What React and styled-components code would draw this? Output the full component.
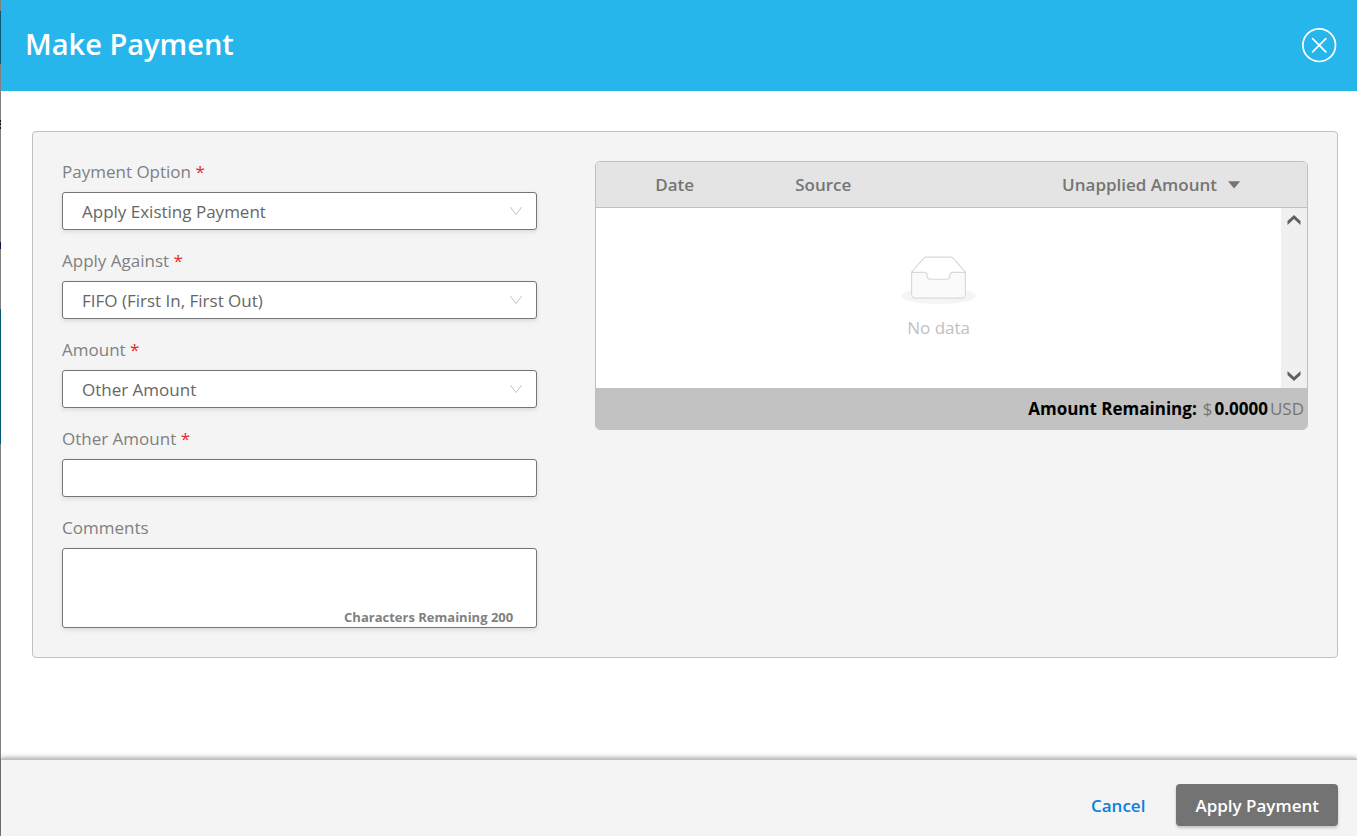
import React from 'react';
import styled, { createGlobalStyle } from 'styled-components';

const GlobalStyle = createGlobalStyle`
  *, *::before, *::after { box-sizing: border-box; }
  body {
    margin: 0;
    font-family: "Open Sans", "Noto Sans", sans-serif;
    font-size: 17px;
    line-height: 24px;
    color: #757575;
    background: #fff;
  }
  button, input, select, textarea { font: inherit; color: inherit; margin: 0; }
`;

/* The left edge shows a sliver of the dimmed page under the drawer. */
const Drawer = styled.div`
  display: flex;
  flex-direction: column;
  min-height: 100vh;
  padding-left: 1px;
  background:
    linear-gradient(#808080 11px, #075a77 11px 64px, #808080 64px 120px, #111 120px 122px,
      #808080 122px 123px, #111 123px 125px, #808080 125px 127px, #111 127px 129px,
      #808080 129px 242px, #1d1147 242px 249px, #808080 249px 309px, #075a77 309px 444px,
      #808080 444px) 0 0 / 1px 100% no-repeat,
    #fff;
`;

const Header = styled.header`
  display: flex;
  align-items: center;
  justify-content: space-between;
  height: 91px;
  padding: 0 20px 0 24px;
  background: #27b6ec;
  color: #fff;
`;

const Title = styled.h1`
  margin: 0;
  padding-bottom: 4px;
  font-size: 29px;
  font-weight: 600;
  line-height: 40px;
`;

const CloseButton = styled.button`
  display: flex;
  padding: 0;
  border: 0;
  background: none;
  cursor: pointer;
`;

const Body = styled.main`
  flex: 1;
  padding: 40px 19px 40px 31px;
`;

const Panel = styled.section`
  display: grid;
  grid-template-columns: 2fr 3fr;
  gap: 58px;
  align-items: start;
  padding: 29px;
  border: 1px solid #c0c0c0;
  border-radius: 4px;
  background: #f4f4f4;
`;

const Form = styled.form`
  display: flex;
  flex-direction: column;
  gap: 20px;
`;

const Field = styled.div`
  display: flex;
  flex-direction: column;
  gap: 10px;
`;

const Label = styled.label`
  line-height: 21px;
  color: #808080;
`;

const Required = styled.span`
  color: #e02b2b;
`;

const Control = styled.div`
  display: grid;
  height: ${(p) => (p.$tall ? '80px' : '38px')};
  border: 1px solid #757575;
  border-radius: 3px;
  background: #fff;
  box-shadow: 0 2px 4px rgba(0, 0, 0, 0.1);

  & > * { grid-area: 1 / 1; min-width: 0; }
`;

const Select = styled.select`
  appearance: none;
  width: 100%;
  padding: 2px 40px 0 19px;
  border: 0;
  border-radius: 3px;
  background: transparent;
  color: #666;
  outline: 0;
`;

const TextInput = styled.input`
  width: 100%;
  padding: 0 19px;
  border: 0;
  background: transparent;
  outline: 0;
`;

const TextArea = styled.textarea`
  width: 100%;
  padding: 6px 19px;
  border: 0;
  background: transparent;
  outline: 0;
  resize: none;
`;

const Chevron = styled.svg`
  place-self: center end;
  margin-right: 13px;
  pointer-events: none;
`;

const Counter = styled.span`
  place-self: end;
  margin-right: 23px;
  font-size: 13px;
  font-weight: 700;
  line-height: 20px;
  color: #808080;
  pointer-events: none;
`;

const TableCard = styled.div`
  overflow: hidden;
  border: 1px solid #c0c0c0;
  border-radius: 5px;
  background: #fff;
`;

const Table = styled.table`
  width: 100%;
  border-collapse: separate;
  border-spacing: 0;
  table-layout: fixed;
`;

const HeadCell = styled.th`
  width: ${(p) => p.$width || 'auto'};
  height: 46px;
  padding: ${(p) => (p.$end ? '0 66px 0 0' : '0 16px')};
  border-bottom: 1px solid #c0c0c0;
  background: #e4e4e4;
  font-weight: 600;
  text-align: ${(p) => (p.$end ? 'right' : 'left')};
`;

const SortButton = styled.button`
  display: inline-flex;
  align-items: center;
  gap: 11px;
  padding: 0;
  border: 0;
  background: none;
  font-weight: 600;
  white-space: nowrap;
  vertical-align: middle;
`;

const BodyCell = styled.td`
  padding: 0;
`;

const ScrollArea = styled.div`
  display: flex;
  height: 180px;
`;

const Empty = styled.div`
  flex: 1;
  display: flex;
  flex-direction: column;
  align-items: center;
  justify-content: center;
  gap: 12px;
  color: #bfbfbf;
`;

const ScrollTrack = styled.div`
  display: flex;
  flex-direction: column;
  justify-content: space-between;
  width: 26px;
  background: #f0f0f0;
`;

const ScrollButton = styled.button`
  display: flex;
  align-items: center;
  justify-content: center;
  height: 24px;
  padding: 0;
  border: 0;
  background: none;
`;

const TotalCell = styled.td`
  height: 41px;
  padding: 0 3px;
  background: #c2c2c2;
  text-align: right;
`;

const Total = styled.div`
  display: flex;
  justify-content: flex-end;
  gap: 2px;
`;

const TotalStrong = styled.strong`
  margin-right: ${(p) => (p.$label ? '4px' : '0')};
  font-weight: 700;
  color: #000;
`;

const Footer = styled.footer`
  display: flex;
  align-items: center;
  justify-content: flex-end;
  gap: 12px;
  padding: 24px 19px 10px;
  border-top: 1px solid #c0c0c0;
  background: #f4f4f4;
  box-shadow: 0 -1px 5px rgba(0, 0, 0, 0.4);
`;

const Button = styled.button`
  height: 42px;
  padding: 2px 19px 0;
  border: 0;
  border-radius: 4px;
  background: ${(p) => (p.$primary ? '#737373' : 'transparent')};
  box-shadow: ${(p) => (p.$primary ? '0 2px 3px rgba(0, 0, 0, 0.2)' : 'none')};
  color: ${(p) => (p.$primary ? '#fff' : '#0a80d8')};
  font-weight: 600;
  cursor: pointer;
`;

function FieldLabel({ id, required, children }) {
  return (
    <Label htmlFor={id}>
      {children}
      {required && <Required> *</Required>}
    </Label>
  );
}

function SelectField({ id, label, value }) {
  return (
    <Field>
      <FieldLabel id={id} required>{label}</FieldLabel>
      <Control>
        <Select id={id} defaultValue={value}>
          <option>{value}</option>
        </Select>
        <Chevron width="14" height="10" viewBox="0 0 14 10" fill="none" stroke="#c4c4c4" aria-hidden="true">
          <path d="M1.3 1l5.7 7.5L12.7 1" />
        </Chevron>
      </Control>
    </Field>
  );
}

function EmptyTray() {
  return (
    <svg width="75" height="48" viewBox="0 0 64 41" fill="none" aria-hidden="true">
      <g transform="translate(0 1)">
        <ellipse fill="#f5f5f5" cx="32" cy="33" rx="32" ry="7" />
        <g stroke="#d9d9d9">
          <path d="M55 12.76L44.854 1.258C44.367.474 43.656 0 42.907 0H21.093c-.749 0-1.46.474-1.947 1.257L9 12.761V22h46v-9.24z" />
          <path
            fill="#fafafa"
            d="M41.613 15.931c0-1.605.994-2.93 2.227-2.931H55v18.137C55 33.26 53.68 35 52.05 35h-40.1C10.32 35 9 33.259 9 31.137V13h11.16c1.233 0 2.227 1.323 2.227 2.928v.022c0 1.605 1.005 2.901 2.237 2.901h14.752c1.232 0 2.237-1.308 2.237-2.913v-.007z"
          />
        </g>
      </g>
    </svg>
  );
}

export default function App() {
  return (
    <>
      <GlobalStyle />
      <Drawer>
        <Header>
          <Title>Make Payment</Title>
          <CloseButton type="button" aria-label="Close">
            <svg width="35" height="35" viewBox="0 0 35 35" fill="none" stroke="#fff" strokeWidth="1.7" strokeLinecap="round">
              <circle cx="17.2" cy="17.2" r="16.3" />
              <path d="M10.6 10.6l13.2 13.2M23.8 10.6L10.6 23.8" />
            </svg>
          </CloseButton>
        </Header>

        <Body>
          <Panel>
            <Form>
              <SelectField id="option" label="Payment Option" value="Apply Existing Payment" />
              <SelectField id="against" label="Apply Against" value="FIFO (First In, First Out)" />
              <SelectField id="amount" label="Amount" value="Other Amount" />
              <Field>
                <FieldLabel id="other" required>Other Amount</FieldLabel>
                <Control><TextInput id="other" type="text" /></Control>
              </Field>
              <Field>
                <FieldLabel id="comments">Comments</FieldLabel>
                <Control $tall>
                  <TextArea id="comments" maxLength={200} />
                  <Counter>Characters Remaining 200</Counter>
                </Control>
              </Field>
            </Form>

            <TableCard>
              <Table>
                <thead>
                  <tr>
                    <HeadCell $width="43px" aria-label="Select" />
                    <HeadCell $width="140px" scope="col">Date</HeadCell>
                    <HeadCell scope="col">Source</HeadCell>
                    <HeadCell $end scope="col">
                      <SortButton type="button">
                        Unapplied Amount
                        <svg width="13" height="8" viewBox="0 0 13 8" aria-hidden="true">
                          <path d="M0 .2h12.2L6.1 7.6z" fill="#757575" />
                        </svg>
                      </SortButton>
                    </HeadCell>
                  </tr>
                </thead>
                <tbody>
                  <tr>
                    <BodyCell colSpan={4}>
                      <ScrollArea>
                        <Empty>
                          <EmptyTray />
                          No data
                        </Empty>
                        <ScrollTrack>
                          <ScrollButton type="button" aria-label="Scroll up">
                            <svg width="14" height="10" viewBox="0 0 14 10" aria-hidden="true">
                              <path d="M7 0l6.5 6v4L7 4 .5 10V6z" fill="#606060" />
                            </svg>
                          </ScrollButton>
                          <ScrollButton type="button" aria-label="Scroll down">
                            <svg width="14" height="10" viewBox="0 0 14 10" aria-hidden="true">
                              <path d="M7 10l6.5-6V0L7 6 .5 0v4z" fill="#606060" />
                            </svg>
                          </ScrollButton>
                        </ScrollTrack>
                      </ScrollArea>
                    </BodyCell>
                  </tr>
                </tbody>
                <tfoot>
                  <tr>
                    <TotalCell colSpan={4}>
                      <Total>
                        <TotalStrong $label>Amount Remaining:</TotalStrong>
                        <span>$</span>
                        <TotalStrong>0.0000</TotalStrong>
                        <span>USD</span>
                      </Total>
                    </TotalCell>
                  </tr>
                </tfoot>
              </Table>
            </TableCard>
          </Panel>
        </Body>

        <Footer>
          <Button type="button">Cancel</Button>
          <Button type="button" $primary>Apply Payment</Button>
        </Footer>
      </Drawer>
    </>
  );
}
